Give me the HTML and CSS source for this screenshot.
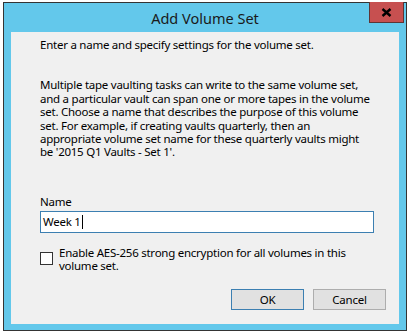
FILE: index.html
```html
<!DOCTYPE html>
<html lang="en">
  <head>
    <meta charset="UTF-8" />
    <title>Add Volume Set</title>
    <link rel="stylesheet" href="styles.css">
  </head>
  <body>
    <div class="window">
      <div class="titlebar">
        <span class="title">Add Volume Set</span>
        <button class="close" aria-label="Close">
          <svg width="11" height="9" viewBox="0 0 11 9">
            <path d="M1.5 1 L9.5 8 M9.5 1 L1.5 8" stroke="#000" stroke-width="2.4" />
          </svg>
        </button>
      </div>

      <div class="content">
        <p class="intro">Enter a name and specify settings for the volume set.</p>

        <p class="details">
          Multiple tape vaulting tasks can write to the same volume set,<br>
          and a particular vault can span one or more tapes in the volume<br>
          set. Choose a name that describes the purpose of this volume<br>
          set. For example, if creating vaults quarterly, then an<br>
          appropriate volume set name for these quarterly vaults might<br>
          be '2015 Q1 Vaults - Set 1'.
        </p>

        <label class="field-label" for="setName">Name</label>
        <div class="text-input" id="setName">Week 1<span class="caret"></span></div>

        <div class="check-row">
          <span class="checkbox"></span>
          <span class="check-label">
            Enable AES-256 strong encryption for all volumes in this<br>
            volume set.
          </span>
        </div>

        <div class="actions">
          <button class="btn btn-default">OK</button>
          <button class="btn">Cancel</button>
        </div>
      </div>
    </div>
  </body>
</html>
```

FILE: styles.css
```css
:root {
  --frame-color: #63c8eb;
  --frame-edge: #343434;
  --panel-bg: #f0f0f0;
  --text-color: #000000;
  --focus-blue: #3c7fb1;
}

body {
  margin: 0;
  padding: 2px 0 0 3px;
  background-color: #ffffff;
  font-family: "Noto Sans", "Open Sans", sans-serif;
  font-size: 11.5px;
  letter-spacing: -0.25px;
  color: var(--text-color);
}

.window {
  width: 388px;
  border: 1px solid var(--frame-edge);
  background-color: var(--frame-color);
  padding: 0 7px 6px 7px;
}

.titlebar {
  height: 29px;
  display: flex;
  align-items: center;
  justify-content: center;
  position: relative;
}

.title {
  font-size: 14.5px;
  letter-spacing: 0;
  color: #1a1a1a;
  margin-top: 1px;
}

.close {
  position: absolute;
  top: -1px;
  right: -5px;
  width: 35px;
  height: 21px;
  padding: 0;
  border: 1px solid #5e3535;
  border-top: none;
  background-color: #c75050;
  display: flex;
  align-items: center;
  justify-content: center;
}

.content {
  background-color: var(--panel-bg);
  padding: 6px 29px 14px 29px;
  display: flex;
  flex-direction: column;
}

.intro,
.details {
  margin: 0;
  line-height: 13.4px;
  white-space: nowrap;
}

.details {
  margin-top: 27px;
}

.field-label {
  margin-top: 36px;
  line-height: 14px;
}

.text-input {
  margin-top: 2px;
  width: 330px;
  height: 20px;
  border: 1px solid var(--focus-blue);
  background-color: #ffffff;
  padding-left: 2px;
  display: flex;
  align-items: center;
}

.caret {
  display: inline-block;
  width: 1px;
  height: 14px;
  background-color: #000;
  margin-left: 1px;
}

.check-row {
  margin-top: 13px;
  display: flex;
  align-items: flex-start;
  gap: 6px;
}

.checkbox {
  width: 11px;
  height: 11px;
  border: 1px solid #333333;
  background-color: #ffffff;
  margin-top: 6px;
  flex: none;
}

.check-label {
  line-height: 13.4px;
  white-space: nowrap;
}

.actions {
  margin-top: 16px;
  display: flex;
  justify-content: flex-end;
  gap: 9px;
  padding-right: 13px;
  margin-right: -29px;
}

.btn {
  width: 73px;
  height: 21px;
  padding: 0;
  border: 1px solid #adadad;
  background-color: #e1e1e1;
  font-family: inherit;
  font-size: 11.5px;
  letter-spacing: -0.25px;
  color: var(--text-color);
}

.btn-default {
  border-color: var(--focus-blue);
}
```
